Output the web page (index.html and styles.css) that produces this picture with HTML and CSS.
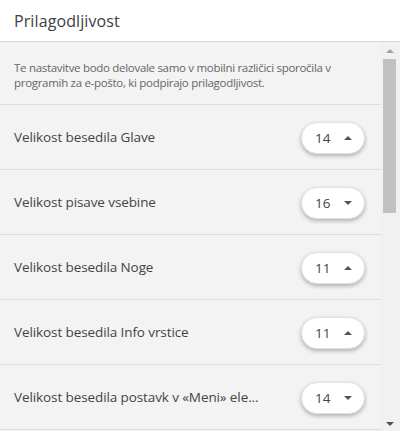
FILE: index.html
```html
<!DOCTYPE html>
<html lang="sl">
<head>
<meta charset="utf-8">
<link rel="stylesheet" href="styles.css">
</head>
<body>
<div class="panel">
  <header class="head">Prilagodljivost</header>
  <div class="main">
    <div class="content">
      <p class="desc">Te nastavitve bodo delovale samo v mobilni različici sporočila v programih za e-pošto, ki podpirajo prilagodljivost.</p>
      <div class="row"><span class="label">Velikost besedila Glave</span><span class="pill"><span class="val">14</span><span class="caret up"></span></span></div>
      <div class="row"><span class="label">Velikost pisave vsebine</span><span class="pill"><span class="val">16</span><span class="caret down"></span></span></div>
      <div class="row"><span class="label">Velikost besedila Noge</span><span class="pill"><span class="val">11</span><span class="caret up"></span></span></div>
      <div class="row"><span class="label">Velikost besedila Info vrstice</span><span class="pill"><span class="val">11</span><span class="caret up"></span></span></div>
      <div class="row"><span class="label" title="Velikost besedila postavk v «Meni» elementu">Velikost besedila postavk v «Meni» ele...</span><span class="pill"><span class="val">14</span><span class="caret down"></span></span></div>
    </div>
    <div class="scrollbar">
      <span class="sb-arrow sb-up"></span>
      <span class="sb-thumb"></span>
      <span class="sb-track"></span>
      <span class="sb-arrow sb-down"></span>
    </div>
  </div>
</div>
</body>
</html>
```
FILE: styles.css
```css
html, body {
  margin: 0;
  padding: 0;
  width: 400px;
  height: 431px;
  overflow: hidden;
  background: #f3f3f3;
  font-family: "Segoe UI", "Open Sans", "Noto Sans", sans-serif;
}
.panel {
  display: flex;
  flex-direction: column;
  height: 431px;
}
.head {
  height: 42px;
  box-sizing: border-box;
  background: #fff;
  border-bottom: 1px solid #d6d6d6;
  padding: 10px 14px 0;
  font-size: 16px;
  letter-spacing: 0.1px;
  color: #404040;
  flex: none;
}
.main {
  flex: 1;
  display: flex;
  min-height: 0;
}
.content {
  flex: 1;
  min-width: 0;
  overflow: hidden;
  background: #f3f3f3;
}
.desc {
  margin: 0;
  height: 63px;
  box-sizing: border-box;
  padding: 18px 20px 0 14px;
  font-size: 11.5px;
  letter-spacing: -0.3px;
  line-height: 15px;
  color: #666;
  border-bottom: 1px solid #dcdcdc;
}
.row {
  height: 65px;
  box-sizing: border-box;
  border-bottom: 1px solid #dcdcdc;
  display: flex;
  align-items: center;
  padding: 0 16px 0 14px;
  gap: 30px;
}
.label {
  flex: 1;
  min-width: 0;
  white-space: nowrap;
  font-size: 13.5px;
  letter-spacing: -0.1px;
  color: #444;
}
.pill {
  flex: none;
  width: 64px;
  height: 32px;
  box-sizing: border-box;
  border-radius: 16px;
  background: #fff;
  border: 1px solid #e2e2e2;
  box-shadow: 0 2px 4px rgba(0,0,0,0.28);
  display: flex;
  align-items: center;
  padding: 0 12px 0 13px;
  justify-content: space-between;
  font-size: 13.5px;
  color: #444;
  margin-top: 1px;
}
.caret {
  width: 0;
  height: 0;
  border-left: 4px solid transparent;
  border-right: 4px solid transparent;
}
.caret.up { border-bottom: 4px solid #555; }
.caret.down { border-top: 4px solid #555; }
.scrollbar {
  flex: none;
  width: 19px;
  background: #f1f1f1;
  display: flex;
  flex-direction: column;
  align-items: flex-start;
}
.sb-arrow {
  width: 0;
  height: 0;
  margin-left: 5px;
  border-left: 4px solid transparent;
  border-right: 4px solid transparent;
}
.sb-up {
  margin-top: 7px;
  border-bottom: 4px solid #a3a3a3;
}
.sb-thumb {
  margin-top: 6px;
  margin-left: 2px;
  width: 13px;
  height: 154px;
  background: #c1c1c1;
}
.sb-track { flex: 1; }
.sb-down {
  margin-bottom: 5px;
  border-top: 4px solid #505050;
}
```
